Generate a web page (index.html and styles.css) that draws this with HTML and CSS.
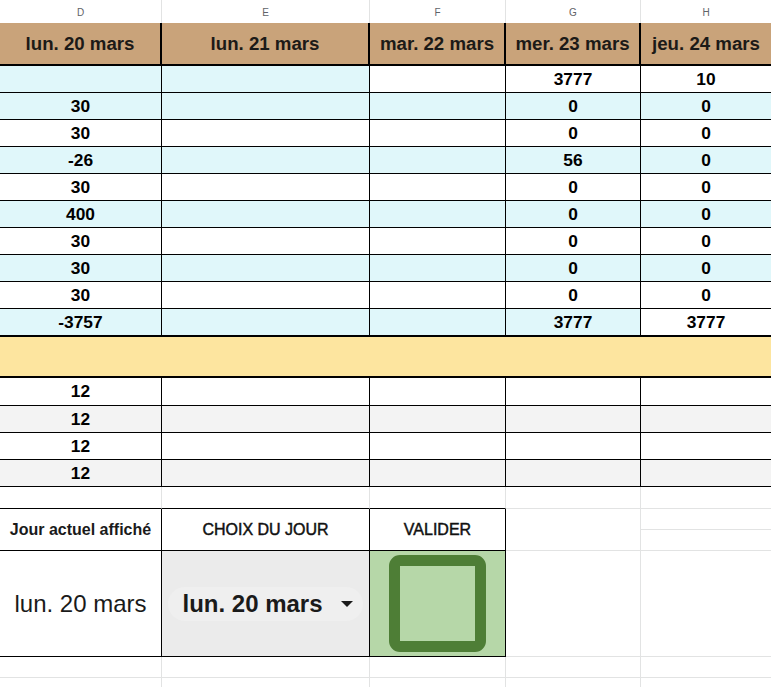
FILE: index.html
```html
<!DOCTYPE html>
<html lang="fr">
<head>
<meta charset="utf-8">
<title>Planning</title>
<link rel="stylesheet" href="styles.css">
</head>
<body>
<div class="sheet">
  <div class="row colhdr">
    <div class="c">D</div><div class="c">E</div><div class="c">F</div><div class="c">G</div><div class="c">H</div>
  </div>
  <div class="row dates">
    <div class="c">lun. 20 mars</div><div class="c">lun. 21 mars</div><div class="c">mar. 22 mars</div><div class="c">mer. 23 mars</div><div class="c">jeu. 24 mars</div>
  </div>

  <div class="row data">
    <div class="c cy"></div><div class="c cy"></div><div class="c"></div><div class="c">3777</div><div class="c">10</div>
  </div>
  <div class="row data cy">
    <div class="c">30</div><div class="c"></div><div class="c"></div><div class="c">0</div><div class="c">0</div>
  </div>
  <div class="row data">
    <div class="c">30</div><div class="c"></div><div class="c"></div><div class="c">0</div><div class="c">0</div>
  </div>
  <div class="row data cy">
    <div class="c">-26</div><div class="c"></div><div class="c"></div><div class="c">56</div><div class="c">0</div>
  </div>
  <div class="row data">
    <div class="c">30</div><div class="c"></div><div class="c"></div><div class="c">0</div><div class="c">0</div>
  </div>
  <div class="row data cy">
    <div class="c">400</div><div class="c"></div><div class="c"></div><div class="c">0</div><div class="c">0</div>
  </div>
  <div class="row data">
    <div class="c">30</div><div class="c"></div><div class="c"></div><div class="c">0</div><div class="c">0</div>
  </div>
  <div class="row data cy">
    <div class="c">30</div><div class="c"></div><div class="c"></div><div class="c">0</div><div class="c">0</div>
  </div>
  <div class="row data">
    <div class="c">30</div><div class="c"></div><div class="c"></div><div class="c">0</div><div class="c">0</div>
  </div>
  <div class="row data last">
    <div class="c cy">-3757</div><div class="c cy"></div><div class="c cy"></div><div class="c cy">3777</div><div class="c">3777</div>
  </div>

  <div class="band"></div>

  <div class="row lo first">
    <div class="c">12</div><div class="c"></div><div class="c"></div><div class="c"></div><div class="c"></div>
  </div>
  <div class="row lo gr">
    <div class="c">12</div><div class="c"></div><div class="c"></div><div class="c"></div><div class="c"></div>
  </div>
  <div class="row lo">
    <div class="c">12</div><div class="c"></div><div class="c"></div><div class="c"></div><div class="c"></div>
  </div>
  <div class="row lo gr">
    <div class="c">12</div><div class="c"></div><div class="c"></div><div class="c"></div><div class="c"></div>
  </div>

  <div class="row gap">
    <div class="c k"></div><div class="c k"></div><div class="c k"></div><div class="c g"></div><div class="c g"></div>
  </div>

  <div class="row ctlhdr">
    <div class="c k lbl">Jour actuel affiché</div>
    <div class="c k lbl reg">CHOIX DU JOUR</div>
    <div class="c k lbl reg">VALIDER</div>
    <div class="c g"></div>
    <div class="c g split"><div class="half"></div></div>
  </div>

  <div class="row ctl">
    <div class="c k shown">lun. 20 mars</div>
    <div class="c k pick">
      <div class="chip"><span class="chip-text">lun. 20 mars</span><span class="caret"></span></div>
    </div>
    <div class="c k valid"><div class="box"></div></div>
    <div class="c g"></div>
    <div class="c g"></div>
  </div>

  <div class="row tail">
    <div class="c g"></div><div class="c g"></div><div class="c g"></div><div class="c g"></div><div class="c g"></div>
  </div>
  <div class="row tail2">
    <div class="c g"></div><div class="c g"></div><div class="c g"></div><div class="c g"></div><div class="c g"></div>
  </div>
</div>
</body>
</html>
```

FILE: styles.css
```css
html, body {
  margin: 0;
  padding: 0;
  background: #ffffff;
  overflow: hidden;
}

.sheet {
  width: 771px;
  font-family: "Liberation Sans", Arial, sans-serif;
  color: #000;
}

.row {
  display: grid;
  grid-template-columns: 162px 208px 136px 135px 130px;
}

.c {
  box-sizing: border-box;
  display: flex;
  align-items: center;
  justify-content: center;
  border-right: 1px solid #000;
  border-bottom: 1px solid #000;
  font-weight: bold;
  font-size: 17.33px;
  white-space: nowrap;
  overflow: hidden;
}

.c:last-child {
  border-right: none;
}

.cy {
  background: #e0f7fa;
}

.gr {
  background: #f3f3f3;
}

/* column letters */
.colhdr {
  height: 23px;
}

.colhdr .c {
  border-right-color: #e2e3e3;
  border-bottom: none;
  font-weight: normal;
  font-size: 10px;
  color: #5f6368;
  padding-top: 1px;
}

/* date header */
.dates {
  height: 43px;
  background: #c9a37a;
}

.dates .c {
  border-bottom-width: 2px;
  border-right-width: 2px;
  font-size: 18.67px;
  color: #1c1a17;
}

.dates .c:last-child {
  border-right: none;
}

.data {
  height: 27px;
}

.data.last {
  height: 28px;
}

.data.last .c {
  border-bottom-width: 2px;
}

.band {
  height: 41px;
  box-sizing: border-box;
  background: #fde59f;
  border-bottom: 2px solid #000;
}

.lo {
  height: 27px;
}

.lo.first {
  height: 28px;
}

/* gridline area */
.gap {
  height: 22px;
}

.c.g {
  border-right-color: #e2e3e3;
  border-bottom-color: #e2e3e3;
}

.c.k {
  border-right-color: #000;
}

.gap .c {
  border-right-color: #e2e3e3;
}

.ctlhdr {
  height: 42px;
}

.lbl {
  font-size: 16px;
  color: #1a1a1a;
}

.lbl.reg {
  font-weight: normal;
  color: #111;
  -webkit-text-stroke: 0.45px #111;
}

.split {
  align-items: flex-start;
}

.half {
  width: 100%;
  height: 21px;
  box-sizing: border-box;
  border-bottom: 1px solid #e2e3e3;
}

.ctl {
  height: 106px;
}

.shown {
  font-weight: normal;
  font-size: 24px;
  color: #1a1a1a;
}

.pick {
  background: #ebebeb;
}

.chip {
  display: flex;
  align-items: center;
  gap: 18px;
  height: 34px;
  padding: 0 10px 0 14px;
  border-radius: 17px;
  background: #efefef;
}

.chip-text {
  font-weight: bold;
  font-size: 24px;
  color: #1a1a1a;
}

.caret {
  width: 0;
  height: 0;
  border-left: 6px solid transparent;
  border-right: 6px solid transparent;
  border-top: 6px solid #1a1a1a;
}

.valid {
  background: #b6d7a8;
}

.box {
  box-sizing: border-box;
  width: 97px;
  height: 97px;
  border: 11px solid #4e7e36;
  border-radius: 11px;
  background: #b6d7a8;
}

.tail {
  height: 21px;
}

.tail2 {
  height: 20px;
}
```
